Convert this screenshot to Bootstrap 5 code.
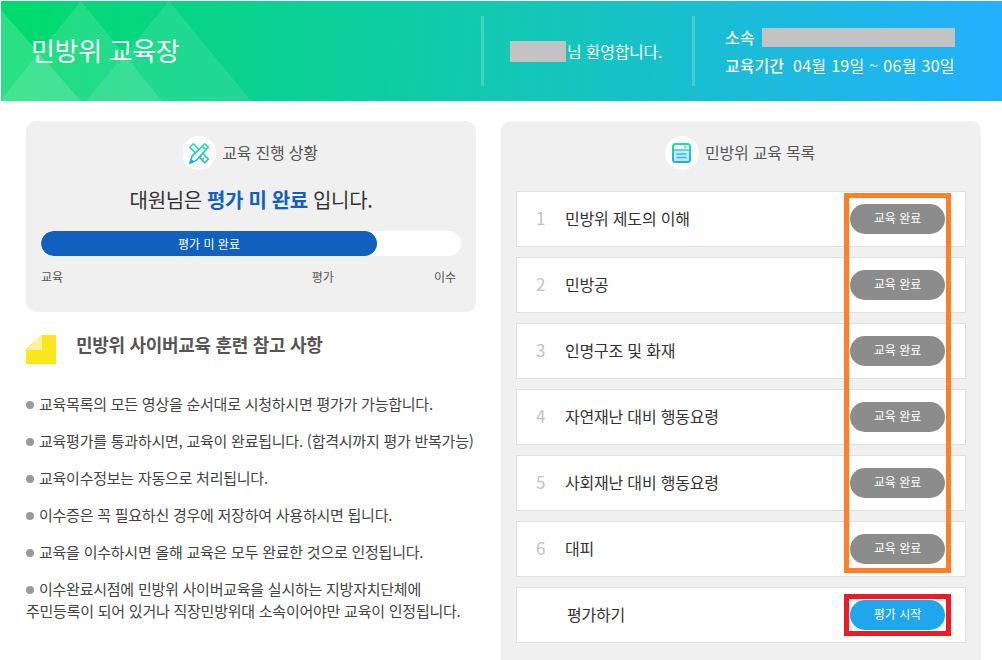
<!DOCTYPE html>
<html lang="ko">
<head>
  <meta charset="UTF-8">
  <meta name="viewport" content="width=device-width, initial-scale=1.0">
  <title>민방위 교육장</title>
  <link href="https://cdn.jsdelivr.net/npm/bootstrap@5.3.0/dist/css/bootstrap.min.css" rel="stylesheet">
  <style>
    html, body { height: 660px; overflow: hidden; }
    body {
      padding: 1px 0 0 1px;
      font-family: "Noto Sans CJK KR", "Noto Sans", sans-serif;
      color: #333;
    }
    .top-bar {
      height: 100px;
      position: relative;
      background: linear-gradient(95deg, #00dc6a 0%, #12c9b0 48%, #23afff 100%);
      color: #fff;
    }
    .top-tri { position: absolute; left: 0; top: 0; }
    .top-title { width: 480px; padding: 0 0 2px 30px; font-size: 26px; line-height: 36px; letter-spacing: -.35px; position: relative; }
    .top-cell { border-left: 3px solid rgba(255,255,255,.2); height: 70px; }
    .welcome { width: 211px; padding-left: 26px; font-size: 16px; letter-spacing: -.25px; }
    .welcome-line { line-height: 22px; }
    .info-cell { padding-left: 30px; font-size: 16px; line-height: 22px; }
    .info-row-first { margin-bottom: 6px; }
    .hidden-name { width: 56px; height: 21px; background: #c3c3c3; margin-right: 1px; }
    .hidden-org { width: 193px; height: 19px; background: #c3c3c3; }
    .info-label { width: 37px; font-weight: 500; }
    .period-label { width: 68px; font-weight: 500; }
    .period-value { letter-spacing: .3px; }
    .content-wrap { padding: 20px 0 0 25px; gap: 25px; }
    .left-col { width: 450px; }
    .right-col { width: 480px; }
    .gray-panel { background: #f0f0f0; padding: 15px; border-radius: 10px; }
    .status-panel { height: 191px; }
    .list-panel { height: 539px; border-radius: 10px 10px 0 0; }
    .panel-title { gap: 6px; height: 34px; padding-right: 2px; font-size: 16px; line-height: 22px; color: #555; letter-spacing: -.2px; }
    .title-text { padding-bottom: 2px; }
    .icon-circle { width: 34px; height: 34px; background: #fff; border-radius: 50%; }
    .status-text { margin-top: 18px; font-size: 20px; line-height: 24px; text-align: center; color: #333; letter-spacing: -.35px; }
    .status-text b { color: #1160c0; font-weight: 700; }
    .status-bar { margin-top: 19px; height: 25px; background: #fff; border-radius: 13px; }
    .status-bar .progress-bar { background: #1160c0; border-radius: 13px; font-size: 12px; }
    .step-labels { margin-top: 12px; padding-right: 5px; display: grid; grid-template-columns: 1fr auto auto; column-gap: 100px; font-size: 12px; line-height: 18px; color: #555; }
    .note-head { margin-top: 23px; gap: 20px; font-size: 18px; font-weight: 700; line-height: 26px; color: #555; letter-spacing: -.3px; }
    .note-head-text { margin-top: -4px; }
    .note-list { list-style: none; margin: 29px 0 0; padding: 0; font-size: 15px; line-height: 22px; color: #444; letter-spacing: -.24px; white-space: nowrap; }
    .note-list li { margin-bottom: 15px; }
    .dot { display: inline-block; width: 8px; height: 8px; border-radius: 50%; background: #9a9a9a; margin-right: 5px; vertical-align: 1px; }
    .list-area { position: relative; margin-top: 21px; display: flex; flex-direction: column; gap: 10px; }
    .edu-row { height: 56px; background: #fff; border: 1px solid #e0e0e0; padding: 0 20px 0 19px; font-size: 16px; color: #333; }
    .edu-num { width: 29px; font-size: 17px; color: #c2c2c2; padding-bottom: 2px; }
    .edu-name { flex: 1; padding-bottom: 2px; letter-spacing: -.2px; }
    .eval-name { padding-left: 31px; }
    .pill-btn { width: 95px; height: 30px; padding: 0 0 2px; font-size: 12px; line-height: 28px; color: #fff; border: 0; }
    .pill-done { background: #8c8c8c; }
    .pill-start { background: #20a6ec; }
    .mark-orange { position: absolute; left: 328px; top: 2px; width: 107px; height: 380px; border: 5px solid #ff7f27; pointer-events: none; }
    .mark-red { position: absolute; left: 328px; top: 403px; width: 107px; height: 42px; border: 5px solid #ed1c24; pointer-events: none; }
  </style>
</head>
<body>

  <header class="top-bar d-flex align-items-center">
    <svg class="top-tri" width="260" height="100" viewBox="0 0 260 100">
      <polygon points="80,0 -1,100 161,100" fill="#fff" fill-opacity=".12"/>
      <polygon points="168,0 85,100 250,100" fill="#fff" fill-opacity=".1"/>
      <polygon points="0,9 0,100 80,100" fill="#fff" fill-opacity=".16"/>
    </svg>
    <div class="top-title">민방위 교육장</div>
    <div class="top-cell welcome d-flex align-items-center">
      <div class="welcome-line d-flex align-items-center"><span class="hidden-name d-inline-block"></span>님 환영합니다.</div>
    </div>
    <div class="top-cell info-cell d-flex flex-column justify-content-center">
      <div class="info-row-first d-flex align-items-center"><span class="info-label">소속</span><span class="hidden-org d-inline-block"></span></div>
      <div class="d-flex"><span class="period-label">교육기간</span><span class="period-value">04월 19일 ~ 06월 30일</span></div>
    </div>
  </header>

  <main class="content-wrap d-flex">
    <section class="left-col">
      <div class="gray-panel status-panel">
        <div class="panel-title d-flex justify-content-center align-items-center">
          <span class="icon-circle d-flex justify-content-center align-items-center">
            <svg width="20" height="21" viewBox="0 0 20 21" fill="none">
              <defs><linearGradient id="g1" x1="0" y1="0" x2="0" y2="1"><stop offset="0" stop-color="#14e6a0"/><stop offset="1" stop-color="#1fa5ff"/></linearGradient></defs>
              <g stroke-width="1.500" stroke-linejoin="round">
                <path d="M4.300 .8 L.8 4.300 L15.700 19.800 L19.300 16.200 Z" stroke="url(#g1)"/>
                <path d="M11 14 L12.500 12.500 M13.500 16.500 L15 15" stroke="#2bb8f0"/>
                <path d="M15.700 .8 L19.300 4.300 L7.100 17.600 L.8 20.200 L2.900 13.400 Z" fill="#fff" stroke="url(#g1)"/>
                <path d="M13.300 3.200 L17 6.900" stroke="#22d8b8"/>
                <path d="M.8 20.200 L2.400 15.800 L5 18.500 Z" fill="#1fa5ff" stroke="none"/>
              </g>
            </svg>
          </span>
          <span class="title-text">교육 진행 상황</span>
        </div>
        <div class="status-text">대원님은 <b>평가 미 완료</b> 입니다.</div>
        <div class="progress status-bar">
          <div class="progress-bar" style="width: 80%">평가 미 완료</div>
        </div>
        <div class="step-labels"><span>교육</span><span>평가</span><span>이수</span></div>
      </div>

      <div class="note-head d-flex align-items-start">
        <svg width="30" height="29" viewBox="0 0 30 29">
          <polygon points="16,0 30,0 30,29 0,29 0,14" fill="#fbe51d"/>
          <polygon points="16,0 16,15 0,15" fill="#fdf29a"/>
        </svg>
        <span class="note-head-text">민방위 사이버교육 훈련 참고 사항</span>
      </div>

      <ul class="note-list">
        <li><span class="dot"></span>교육목록의 모든 영상을 순서대로 시청하시면 평가가 가능합니다.</li>
        <li><span class="dot"></span>교육평가를 통과하시면, 교육이 완료됩니다. (합격시까지 평가 반복가능)</li>
        <li><span class="dot"></span>교육이수정보는 자동으로 처리됩니다.</li>
        <li><span class="dot"></span>이수증은 꼭 필요하신 경우에 저장하여 사용하시면 됩니다.</li>
        <li><span class="dot"></span>교육을 이수하시면 올해 교육은 모두 완료한 것으로 인정됩니다.</li>
        <li><span class="dot"></span>이수완료시점에 민방위 사이버교육을 실시하는 지방자치단체에<br>주민등록이 되어 있거나 직장민방위대 소속이어야만 교육이 인정됩니다.</li>
      </ul>
    </section>

    <section class="right-col">
      <div class="gray-panel list-panel">
        <div class="panel-title d-flex justify-content-center align-items-center">
          <span class="icon-circle d-flex justify-content-center align-items-center">
            <svg width="19" height="20" viewBox="0 0 19 20" fill="none">
              <defs><linearGradient id="g2" x1="0" y1="0" x2="0" y2="1"><stop offset="0" stop-color="#14e6a0"/><stop offset="1" stop-color="#1fa5ff"/></linearGradient></defs>
              <rect x="1" y="1" width="17" height="18" rx="2.5" stroke="url(#g2)" stroke-width="2"/>
              <rect x="2" y="7.5" width="15" height="10.5" fill="#bfeafc"/>
              <path d="M2 7 H17" stroke="#2bd0c8" stroke-width="1.5"/>
              <path d="M4.500 11 H14.500 M4.500 14.500 H14.500" stroke="#35b5f5" stroke-width="1.300"/>
              <path d="M11.500 3.500 H15 L13.250 5.500 Z" fill="#35d8b0"/>
            </svg>
          </span>
          <span class="title-text">민방위 교육 목록</span>
        </div>
        <div class="list-area">
          <div class="edu-row d-flex align-items-center"><span class="edu-num">1</span><span class="edu-name">민방위 제도의 이해</span><button class="btn pill-btn pill-done rounded-pill">교육 완료</button></div>
          <div class="edu-row d-flex align-items-center"><span class="edu-num">2</span><span class="edu-name">민방공</span><button class="btn pill-btn pill-done rounded-pill">교육 완료</button></div>
          <div class="edu-row d-flex align-items-center"><span class="edu-num">3</span><span class="edu-name">인명구조 및 화재</span><button class="btn pill-btn pill-done rounded-pill">교육 완료</button></div>
          <div class="edu-row d-flex align-items-center"><span class="edu-num">4</span><span class="edu-name">자연재난 대비 행동요령</span><button class="btn pill-btn pill-done rounded-pill">교육 완료</button></div>
          <div class="edu-row d-flex align-items-center"><span class="edu-num">5</span><span class="edu-name">사회재난 대비 행동요령</span><button class="btn pill-btn pill-done rounded-pill">교육 완료</button></div>
          <div class="edu-row d-flex align-items-center"><span class="edu-num">6</span><span class="edu-name">대피</span><button class="btn pill-btn pill-done rounded-pill">교육 완료</button></div>
          <div class="edu-row d-flex align-items-center"><span class="edu-name eval-name">평가하기</span><button class="btn pill-btn pill-start rounded-pill">평가 시작</button></div>
          <div class="mark-orange"></div>
          <div class="mark-red"></div>
        </div>
      </div>
    </section>
  </main>

  <script src="https://cdn.jsdelivr.net/npm/bootstrap@5.3.0/dist/js/bootstrap.bundle.min.js"></script>
</body>
</html>
